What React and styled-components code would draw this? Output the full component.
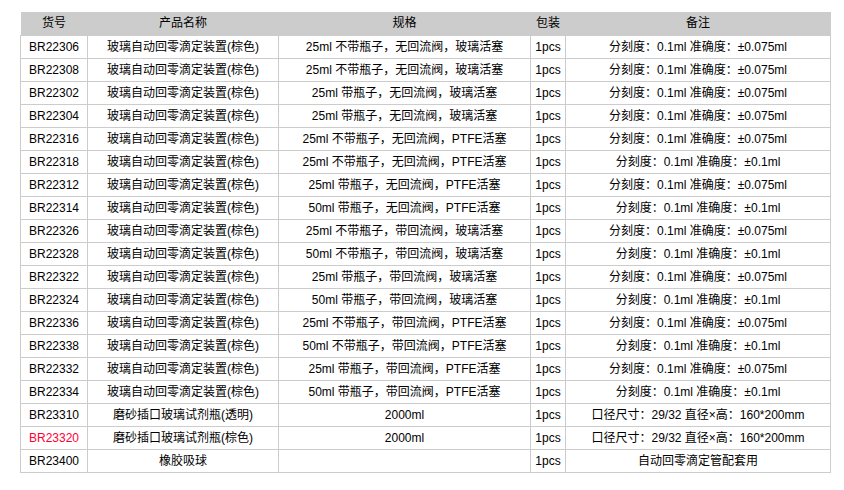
import styled, { createGlobalStyle } from 'styled-components';

const GlobalStyle = createGlobalStyle`
  body {
    margin: 0;
    background: #fff;
    font-family: 'Liberation Sans', Arial, 'Noto Sans CJK SC', sans-serif;
  }
`;

const rows = [
  ['BR22306', '玻璃自动回零滴定装置(棕色)', '25ml 不带瓶子，无回流阀，玻璃活塞', '分刻度：0.1ml 准确度：±0.075ml'],
  ['BR22308', '玻璃自动回零滴定装置(棕色)', '25ml 不带瓶子，无回流阀，玻璃活塞', '分刻度：0.1ml 准确度：±0.075ml'],
  ['BR22302', '玻璃自动回零滴定装置(棕色)', '25ml 带瓶子，无回流阀，玻璃活塞', '分刻度：0.1ml 准确度：±0.075ml'],
  ['BR22304', '玻璃自动回零滴定装置(棕色)', '25ml 带瓶子，无回流阀，玻璃活塞', '分刻度：0.1ml 准确度：±0.075ml'],
  ['BR22316', '玻璃自动回零滴定装置(棕色)', '25ml 不带瓶子，无回流阀，PTFE活塞', '分刻度：0.1ml 准确度：±0.075ml'],
  ['BR22318', '玻璃自动回零滴定装置(棕色)', '25ml 不带瓶子，无回流阀，PTFE活塞', '分刻度：0.1ml 准确度：±0.1ml'],
  ['BR22312', '玻璃自动回零滴定装置(棕色)', '25ml 带瓶子，无回流阀，PTFE活塞', '分刻度：0.1ml 准确度：±0.075ml'],
  ['BR22314', '玻璃自动回零滴定装置(棕色)', '50ml 带瓶子，无回流阀，PTFE活塞', '分刻度：0.1ml 准确度：±0.1ml'],
  ['BR22326', '玻璃自动回零滴定装置(棕色)', '25ml 不带瓶子，带回流阀，玻璃活塞', '分刻度：0.1ml 准确度：±0.075ml'],
  ['BR22328', '玻璃自动回零滴定装置(棕色)', '50ml 不带瓶子，带回流阀，玻璃活塞', '分刻度：0.1ml 准确度：±0.1ml'],
  ['BR22322', '玻璃自动回零滴定装置(棕色)', '25ml 带瓶子，带回流阀，玻璃活塞', '分刻度：0.1ml 准确度：±0.075ml'],
  ['BR22324', '玻璃自动回零滴定装置(棕色)', '50ml 带瓶子，带回流阀，玻璃活塞', '分刻度：0.1ml 准确度：±0.1ml'],
  ['BR22336', '玻璃自动回零滴定装置(棕色)', '25ml 不带瓶子，带回流阀，PTFE活塞', '分刻度：0.1ml 准确度：±0.075ml'],
  ['BR22338', '玻璃自动回零滴定装置(棕色)', '50ml 不带瓶子，带回流阀，PTFE活塞', '分刻度：0.1ml 准确度：±0.1ml'],
  ['BR22332', '玻璃自动回零滴定装置(棕色)', '25ml 带瓶子，带回流阀，PTFE活塞', '分刻度：0.1ml 准确度：±0.075ml'],
  ['BR22334', '玻璃自动回零滴定装置(棕色)', '50ml 带瓶子，带回流阀，PTFE活塞', '分刻度：0.1ml 准确度：±0.1ml'],
  ['BR23310', '磨砂插口玻璃试剂瓶(透明)', '2000ml', '口径尺寸：29/32 直径×高：160*200mm'],
  ['BR23320', '磨砂插口玻璃试剂瓶(棕色)', '2000ml', '口径尺寸：29/32 直径×高：160*200mm', true],
  ['BR23400', '橡胶吸球', '', '自动回零滴定管配套用'],
];

const Page = styled.div`
  padding: 12px 14px 0 20px;
`;

const Table = styled.table`
  width: 810px;
  border-collapse: collapse;
  table-layout: fixed;
  font-size: 12px;
  color: #000;
`;

const Head = styled.th`
  background: #cccccc;
  font-weight: normal;
  height: 23px;
  padding: 0;
  text-align: center;
  line-height: 23px;
`;

const Cell = styled.td`
  border: 1px solid #cccccc;
  height: 22px;
  padding: 0;
  text-align: center;
  white-space: nowrap;
  line-height: 22px;
  color: ${(p) => (p.$red ? '#ff0033' : '#000')};
`;

export default function App() {
  return (
    <Page>
      <GlobalStyle />
      <Table>
        <colgroup>
          <col style={{ width: 67 }} />
          <col style={{ width: 191 }} />
          <col style={{ width: 252 }} />
          <col style={{ width: 35 }} />
          <col style={{ width: 265 }} />
        </colgroup>
        <thead>
          <tr>
            <Head>货号</Head>
            <Head>产品名称</Head>
            <Head>规格</Head>
            <Head>包装</Head>
            <Head>备注</Head>
          </tr>
        </thead>
        <tbody>
          {rows.map(([code, name, spec, note, red]) => (
            <tr key={code}>
              <Cell $red={red}>{code}</Cell>
              <Cell>{name}</Cell>
              <Cell>{spec}</Cell>
              <Cell>1pcs</Cell>
              <Cell>{note}</Cell>
            </tr>
          ))}
        </tbody>
      </Table>
    </Page>
  );
}
